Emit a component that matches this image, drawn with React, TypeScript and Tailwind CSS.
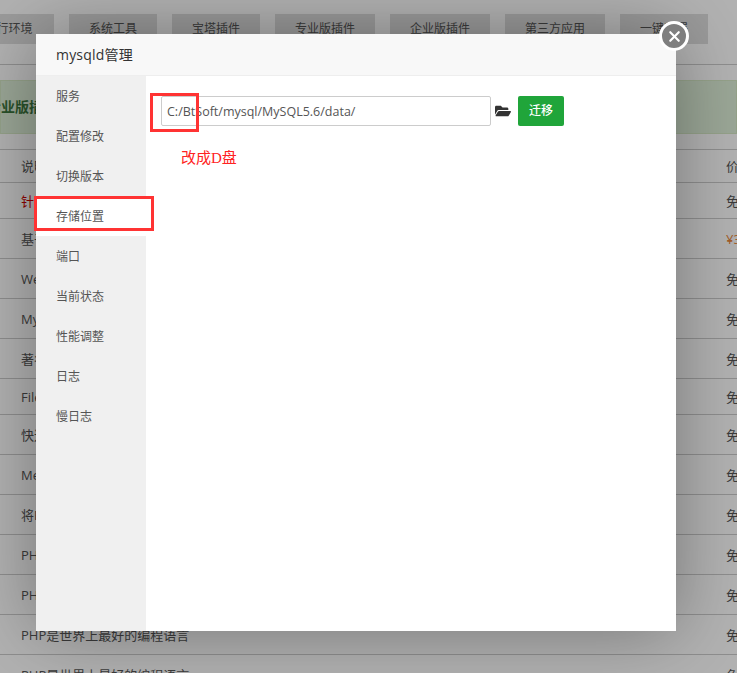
import { FaFolderOpen } from "react-icons/fa";
import { XIcon } from "lucide-react";

const tabs = ["运行环境", "系统工具", "宝塔插件", "专业版插件", "企业版插件", "第三方应用", "一键部署"];

const rows = [
	{ name: "针对专业版用户的插件说明", price: "免费", red: true, height: "h-[36px]" },
	{ name: "基于Nginx的高性能服务器", price: "¥39.8", height: "h-[40px]" },
	{ name: "Web服务器软件", price: "免费", height: "h-[40px]" },
	{ name: "MySQL关系型数据库", price: "免费", height: "h-[40px]" },
	{ name: "著名的开源数据库软件", price: "免费", height: "h-[40px]" },
	{ name: "FileZilla Server", price: "免费", height: "h-[36px]" },
	{ name: "快速部署工具", price: "免费", height: "h-[40px]" },
	{ name: "Memcached缓存", price: "免费", height: "h-[40px]" },
	{ name: "将PHP脚本编译加速", price: "免费", height: "h-[40px]" },
	{ name: "PHP是世界上最好的编程语言", price: "免费", height: "h-[40px]" },
	{ name: "PHP是世界上最好的编程语言", price: "免费", height: "h-[40px]" },
	{ name: "PHP是世界上最好的编程语言", price: "免费", height: "h-[40px]" },
	{ name: "PHP是世界上最好的编程语言", price: "免费", height: "h-[40px]" },
];

const menu = ["服务", "配置修改", "切换版本", "存储位置", "端口", "当前状态", "性能调整", "日志", "慢日志"];

function SoftwareList() {
	return (
		<div className="h-[673px] w-[737px] overflow-hidden bg-white text-[13px] text-[#555]">
			<div className="ml-[-37px] flex w-[800px] gap-[15px] pt-[14px] text-xs">
				{tabs.map((tab, i) => (
					<div
						className={`flex h-[30px] items-center justify-center whitespace-nowrap bg-[#dedede] ${
							i === 3 || i === 4 || i === 5 ? "w-[100px]" : i === 0 ? "w-[91px]" : "w-[88px]"
						}`}
						key={tab}
					>
						{tab}
					</div>
				))}
			</div>
			<div className="mt-[20px] border-[#ccc] border-t" />
			<div className="mt-[15px] flex h-[54px] items-center border border-[#d6e9c6] bg-[#dff0d8] font-bold text-[#3c763d] text-sm">
				<span className="ml-[-14px] whitespace-nowrap">专业版插件</span>
			</div>
			<div className="mt-[15px] flex h-[34px] items-center justify-between border-[#ccc] border-t border-b pt-[2px] pl-[21px]">
				<span>说明</span>
				<span className="mr-[-24px] w-[35px] shrink-0 whitespace-nowrap">价格</span>
			</div>
			{rows.map((row, i) => (
				<div
					className={`flex items-center justify-between border-[#ccc] border-b pt-[2px] pl-[21px] ${row.height}`}
					key={i}
				>
					<span className={row.red ? "text-[#c00]" : ""}>{row.name}</span>
					<span
						className={`mr-[-24px] w-[35px] shrink-0 whitespace-nowrap ${
							row.price === "免费" ? "" : "text-[#e8863a]"
						}`}
					>
						{row.price}
					</span>
				</div>
			))}
		</div>
	);
}

export default function App() {
	return (
		<div
			className="relative h-[673px] w-[737px] overflow-hidden"
			style={{ fontFamily: '"Open Sans", "Noto Sans CJK SC", sans-serif' }}
		>
			<SoftwareList />
			<div className="absolute inset-0 bg-black/30" />

			<div className="absolute top-[34px] left-[36px] flex h-[597px] w-[640px] flex-col bg-white shadow-[0_0_70px_rgba(0,0,0,0.35)]">
				<div className="flex h-[42px] shrink-0 items-center border-[#eee] border-b bg-[#f8f8f8] pl-[20px] text-[#333] text-sm tracking-[0.2px]">
					mysqld管理
				</div>
				<div className="flex min-h-0 flex-1">
					<div className="w-[110px] shrink-0 bg-[#f0f0f0] text-[#555] text-xs">
						{menu.map((item) => (
							<div
								className={`flex h-[40px] items-center pt-[2px] pl-[20px] ${item === "存储位置" ? "bg-white" : ""}`}
								key={item}
							>
								{item}
							</div>
						))}
					</div>
					<div className="flex-1 px-[15px] pt-[20px]">
						<div className="flex items-center">
							<input
								className="h-[30px] w-[330px] rounded-[2px] border border-[#ccc] px-[5px] text-[#555] text-[12.5px]"
								defaultValue="C:/BtSoft/mysql/MySQL5.6/data/"
								type="text"
							/>
							<FaFolderOpen className="ml-[4px] size-[16px] text-[#333]" />
							<button
								className="ml-[7px] h-[30px] w-[46px] rounded-[2px] bg-[#20a53a] font-medium text-white text-xs"
								type="button"
							>
								迁移
							</button>
						</div>
						<p
							className="mt-[21px] ml-[20px] text-[#f22] text-[15px]"
							style={{ fontFamily: '"Liberation Serif", "Noto Sans CJK SC", serif' }}
						>
							改成D盘
						</p>
					</div>
				</div>
			</div>

			<div className="absolute top-[93px] left-[150px] h-[39px] w-[49px] border-[3px] border-[#f33]" />
			<div className="absolute top-[196px] left-[34px] h-[35px] w-[120px] border-[3px] border-[#f33]" />

			<div className="absolute top-[21px] left-[659px] flex size-[30px] items-center justify-center rounded-full border-[3px] border-white bg-[#7f7f7f]">
				<XIcon className="size-[17px] text-white" strokeWidth={3} />
			</div>
		</div>
	);
}
